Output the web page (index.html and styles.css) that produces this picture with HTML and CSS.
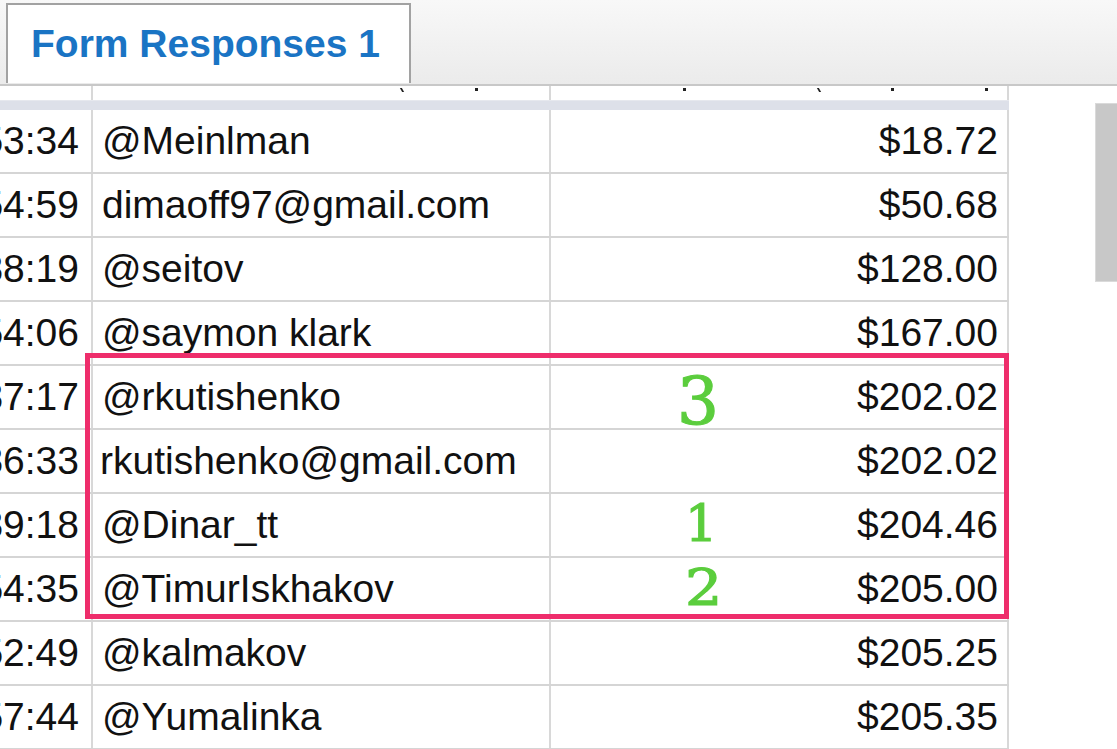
FILE: index.html
```html
<!DOCTYPE html>
<html>
<head>
<meta charset="utf-8">
<link rel="stylesheet" href="styles.css">
</head>
<body>
<div class="topbar">
  <div class="tab">Form Responses 1</div>
</div>
<div class="main">
  <div class="sheet">
    <div class="row head">
      <div class="cell c1"></div>
      <div class="cell c2"><span class="mk slant" style="margin-left:299px"></span><span class="mk" style="margin-left:72px"></span></div>
      <div class="cell c3"><span class="mk" style="margin-left:132px"></span><span class="mk slant" style="margin-left:132px"></span><span class="mk" style="margin-left:71px"></span><span class="mk" style="margin-left:91px"></span></div>
    </div>
    <div class="band"></div>
    <div class="row"><div class="cell c1">10:53:34</div><div class="cell c2">@Meinlman</div><div class="cell c3">$18.72</div></div>
    <div class="row"><div class="cell c1">10:54:59</div><div class="cell c2">dimaoff97@gmail.com</div><div class="cell c3">$50.68</div></div>
    <div class="row"><div class="cell c1">11:38:19</div><div class="cell c2">@seitov</div><div class="cell c3">$128.00</div></div>
    <div class="row"><div class="cell c1">11:54:06</div><div class="cell c2">@saymon klark</div><div class="cell c3">$167.00</div></div>
    <div class="row"><div class="cell c1">12:37:17</div><div class="cell c2">@rkutishenko</div><div class="cell c3">$202.02</div></div>
    <div class="row"><div class="cell c1">12:36:33</div><div class="cell c2 tight">rkutishenko@gmail.com</div><div class="cell c3">$202.02</div></div>
    <div class="row"><div class="cell c1">12:39:18</div><div class="cell c2">@Dinar_tt</div><div class="cell c3">$204.46</div></div>
    <div class="row"><div class="cell c1">12:54:35</div><div class="cell c2">@TimurIskhakov</div><div class="cell c3">$205.00</div></div>
    <div class="row"><div class="cell c1">13:52:49</div><div class="cell c2">@kalmakov</div><div class="cell c3">$205.25</div></div>
    <div class="row"><div class="cell c1">13:57:44</div><div class="cell c2">@Yumalinka</div><div class="cell c3">$205.35</div></div>

    <div class="highlight"></div>
    <div class="note n3">3</div>
    <div class="note n1">1</div>
    <div class="note n2">2</div>
  </div>
  <div class="scroll"><div class="thumb"></div></div>
</div>
</body>
</html>
```

FILE: styles.css
```css
html, body {
  margin: 0;
  padding: 0;
  background: #ffffff;
  overflow: hidden;
  font-family: "Liberation Sans", Arial, sans-serif;
}

.topbar {
  height: 81px;
  padding: 3px 0 0 6px;
  background: linear-gradient(#f8f8f8, #ebebeb);
  border-bottom: 2px solid #c8c8c8;
  display: flex;
  align-items: flex-start;
}

.tab {
  box-sizing: border-box;
  width: 405px;
  height: 80px;
  background: #ffffff;
  border: 2px solid #a2a2a2;
  border-bottom: none;
  padding: 19px 0 0 23px;
  color: #1a74c4;
  font-weight: bold;
  font-size: 39px;
  line-height: 39px;
  white-space: nowrap;
}

.main {
  display: flex;
  align-items: flex-start;
}

.sheet {
  position: relative;
  width: 1009px;
  overflow: hidden;
  flex: none;
}

.row {
  display: grid;
  grid-template-columns: 200px 458px 458px;
  margin-left: -107px;
  height: 64px;
  box-sizing: border-box;
  border-bottom: 2px solid #d5d5d5;
}

.row.head {
  height: 14px;
  border-bottom: none;
}

.band {
  height: 10px;
  margin-left: -107px;
  background: #dde0e9;
  border-top: 1px solid #e6e8ee;
  box-sizing: border-box;
}

.cell {
  box-sizing: border-box;
  border-right: 2px solid #d8d8d8;
  font-size: 39px;
  line-height: 62px;
  color: #111111;
  white-space: nowrap;
  overflow: hidden;
}

.head .cell {
  line-height: 14px;
  display: flex;
  align-items: flex-start;
}

.c1 {
  text-align: right;
  padding-right: 12px;
}

.c2 {
  padding-left: 9px;
}

.c2.tight {
  padding-left: 7px;
}

.c3 {
  text-align: right;
  padding-right: 9px;
}

.mk {
  display: inline-block;
  width: 3px;
  height: 3px;
  margin-top: 2px;
  background: #222222;
  flex: none;
}

.mk.slant {
  transform: skewX(30deg);
  height: 4px;
  width: 2px;
}

.highlight {
  position: absolute;
  left: 85px;
  top: 267px;
  width: 924px;
  height: 266px;
  box-sizing: border-box;
  border: 5px solid #ee2d6b;
}

.note {
  position: absolute;
  font-family: "DejaVu Serif", "Liberation Serif", serif;
  color: #5bcd3d;
  line-height: 1;
  -webkit-text-stroke: 1.2px #5bcd3d;
}

.n3 {
  left: 677px;
  top: 283px;
  font-size: 66px;
}

.n1 {
  left: 685px;
  top: 412px;
  font-size: 51px;
}

.n2 {
  left: 685px;
  top: 476px;
  font-size: 51px;
  transform: scaleX(1.15);
  transform-origin: left center;
}

.scroll {
  margin-left: 86px;
  padding-top: 17px;
  flex: none;
}

.thumb {
  width: 30px;
  height: 179px;
  box-sizing: border-box;
  background: #c8c8c8;
  border: 1px solid #dadada;
}
```
